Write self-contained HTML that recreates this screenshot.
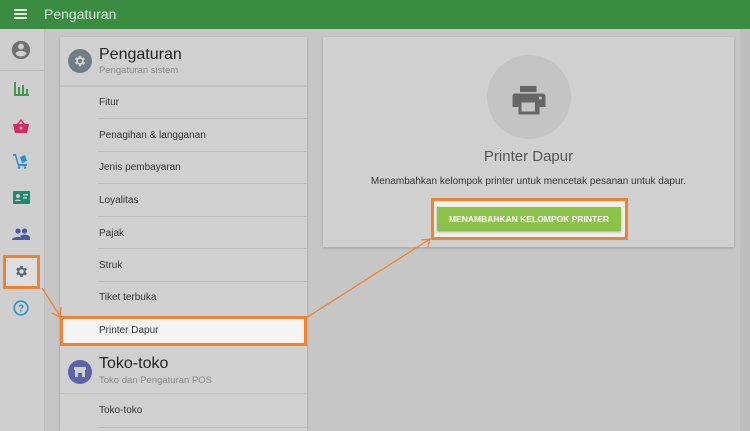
<!DOCTYPE html>
<html><head><style>
*{margin:0;padding:0;box-sizing:border-box}
html,body{width:750px;height:431px;overflow:hidden}
body{background:#c6c6c6;font-family:"Liberation Sans",sans-serif;position:relative}
.top{position:absolute;left:0;top:0;width:750px;height:29px;background:#3a8d40;color:#d8ead8;font-size:14px}
.side{position:absolute;left:0;top:29px;width:45px;height:402px;background:#cfcfcf;border-right:1px solid #bdbdbd}
.card{position:absolute;background:#d0d0d0;box-shadow:0 1px 3px rgba(0,0,0,.2)}
.it{position:absolute;left:39px;font-size:10px;color:#333}
.ln{position:absolute;left:38px;right:0;height:1px;background:#bcbcbc}
.ab{position:absolute}
</style></head><body>
<div class="top">
 <div style="position:absolute;left:14px;top:9px;width:13px;height:2px;background:#e0eee0;box-shadow:0 4px 0 #e0eee0,0 8px 0 #e0eee0"></div>
 <div style="position:absolute;left:44px;top:6px">Pengaturan</div>
</div>
<div style="position:absolute;left:740px;top:29px;width:10px;height:402px;background:#bebebe"></div>
<div class="side">
 <svg class="ab" style="left:10px;top:10px" width="22" height="22" viewBox="0 0 24 24"><path fill="#707070" d="M12 2a10 10 0 100 20 10 10 0 000-20zm0 3a3.2 3.2 0 110 6.4A3.2 3.2 0 0112 5zm0 14.2a7.2 7.2 0 01-6-3.2c0-2 4-3.1 6-3.1s6 1.1 6 3.1a7.2 7.2 0 01-6 3.2z"/></svg>
 <div style="position:absolute;left:0;top:41px;width:44px;height:1px;background:#bbb"></div>
 <svg class="ab" style="left:14px;top:53px" width="15" height="14" viewBox="0 0 15 14"><path fill="#3f9b47" d="M0 0h2v14H0zM0 12h15v2H0zM4 5h2v8H4zM8 3h2v10H8zM12 7h2v6h-2z"/></svg>
 <svg class="ab" style="left:13px;top:90px" width="16" height="14" viewBox="0 0 16 14"><path fill="#d8285e" d="M0 5h16l-2 9H2zM4 5l4-5 4 5h-2L8 2 6 5z"/><circle cx="8" cy="9" r="1.5" fill="#cfcfcf"/></svg>
 <svg class="ab" style="left:13px;top:124px" width="16" height="16" viewBox="0 0 16 16"><path fill="#2c8fd0" d="M0 1h3l3 10h8v2H5L2 3H0zM7 4l5-2 2 6-5 2z"/><circle cx="6" cy="14.5" r="1.3" fill="#2c8fd0"/><circle cx="12" cy="14.5" r="1.3" fill="#2c8fd0"/></svg>
 <svg class="ab" style="left:13px;top:162px" width="17" height="13" viewBox="0 0 17 13"><rect width="17" height="13" rx="1" fill="#1e8a6e"/><circle cx="5" cy="5" r="2" fill="#d0d0d0"/><path fill="#d0d0d0" d="M2 10c0-2 6-2 6 0zM10 3h5v1.5h-5zM10 6h4v1.5h-4z"/></svg>
 <svg class="ab" style="left:12px;top:199px" width="18" height="12" viewBox="0 0 18 12"><circle cx="6" cy="3" r="2.6" fill="#4a57a5"/><circle cx="12.5" cy="3" r="2.6" fill="#4a57a5"/><path fill="#4a57a5" d="M0 12c0-4 12-4 12 0zM8 8c2-2 10-2 10 2v2h-5z"/></svg>
 <div style="position:absolute;left:3px;top:226px;width:37px;height:34px;border:3px solid #f08332;background:#dedede"></div>
 <svg class="ab" style="left:14px;top:235px" width="15" height="15" viewBox="0 0 24 24"><path fill="#5b6b76" d="M19.4 13a7.5 7.5 0 000-2l2.1-1.6-2-3.5-2.5 1a7.3 7.3 0 00-1.7-1L15 3h-4l-.4 2.6a7.3 7.3 0 00-1.7 1l-2.5-1-2 3.5L6.6 11a7.5 7.5 0 000 2l-2.1 1.6 2 3.5 2.5-1a7.3 7.3 0 001.7 1L11 21h4l.4-2.6a7.3 7.3 0 001.7-1l2.5 1 2-3.5zM13 15.5a3.5 3.5 0 110-7 3.5 3.5 0 010 7z" transform="translate(-1 0)"/></svg>
 <svg class="ab" style="left:13px;top:271px" width="16" height="16" viewBox="0 0 16 16"><circle cx="8" cy="8" r="6.8" fill="none" stroke="#2c8fd0" stroke-width="1.6"/><text x="8" y="11.5" font-size="10" font-weight="bold" text-anchor="middle" fill="#2c8fd0" font-family="Liberation Sans">?</text></svg>
</div>

<div class="card" style="left:60px;top:37px;width:247px;height:394px">
 <div style="position:absolute;left:8px;top:12px;width:24px;height:24px;border-radius:50%;background:#6d7c85"></div>
 <svg class="ab" style="left:13px;top:17px" width="14" height="14" viewBox="0 0 24 24"><path fill="#d0d0d0" d="M19.4 13a7.5 7.5 0 000-2l2.1-1.6-2-3.5-2.5 1a7.3 7.3 0 00-1.7-1L15 3h-4l-.4 2.6a7.3 7.3 0 00-1.7 1l-2.5-1-2 3.5L6.6 11a7.5 7.5 0 000 2l-2.1 1.6 2 3.5 2.5-1a7.3 7.3 0 001.7 1L11 21h4l.4-2.6a7.3 7.3 0 001.7-1l2.5 1 2-3.5zM13 15.5a3.5 3.5 0 110-7 3.5 3.5 0 010 7z" transform="translate(-1 0)"/></svg>
 <div style="position:absolute;left:39px;top:9px;font-size:16px;color:#222">Pengaturan</div>
 <div style="position:absolute;left:39px;top:28px;font-size:9.5px;color:#888">Pengaturan sistem</div>
 <div style="position:absolute;left:0;right:0;top:48px;height:2px;background:#c2c2c2"></div>
 <div class="it" style="top:60px">Fitur</div><div class="ln" style="top:81px"></div>
 <div class="it" style="top:93px">Penagihan &amp; langganan</div><div class="ln" style="top:114px"></div>
 <div class="it" style="top:125px">Jenis pembayaran</div><div class="ln" style="top:146px"></div>
 <div class="it" style="top:158px">Loyalitas</div><div class="ln" style="top:179px"></div>
 <div class="it" style="top:191px">Pajak</div><div class="ln" style="top:211px"></div>
 <div class="it" style="top:223px">Struk</div><div class="ln" style="top:244px"></div>
 <div class="it" style="top:255px">Tiket terbuka</div>
 <div style="position:absolute;left:0;top:279px;width:247px;height:30px;background:#f3f3f3;border:3px solid #f08332"></div>
 <div class="it" style="top:288px">Printer Dapur</div>
 <div style="position:absolute;left:8px;top:323px;width:24px;height:24px;border-radius:50%;background:#5d63a8"></div>
 <svg class="ab" style="left:14px;top:330px" width="12" height="10" viewBox="0 0 12 10"><path fill="#d0d0d0" d="M0 0h12v3H0zM1 3h10v7H1z"/><rect x="4" y="6" width="4" height="4" fill="#5d63a8"/></svg>
 <div style="position:absolute;left:39px;top:318px;font-size:16px;color:#222">Toko-toko</div>
 <div style="position:absolute;left:39px;top:338px;font-size:9.5px;color:#888">Toko dan Pengaturan POS</div>
 <div style="position:absolute;left:0;right:0;top:356px;height:1px;background:#c2c2c2"></div>
 <div class="it" style="top:368px">Toko-toko</div><div class="ln" style="top:390px"></div>
</div>

<div class="card" style="left:323px;top:37px;width:411px;height:210px">
 <div style="position:absolute;left:164px;top:18px;width:84px;height:84px;border-radius:50%;background:#c4c4c4"></div>
 <svg class="ab" style="left:188px;top:46px" width="36" height="36" viewBox="0 0 24 24"><path fill="#666" d="M6 2h11v4H6zM2 7h19a2 2 0 012 2v7h-4v5H5v-5H1V9a2 2 0 011-2z"/><rect x="7" y="13" width="9" height="6" fill="#c4c4c4"/><circle cx="19.5" cy="10" r="1" fill="#c4c4c4"/></svg>
 <div style="position:absolute;left:0;right:0;top:111px;text-align:center;font-size:15px;color:#555">Printer Dapur</div>
 <div style="position:absolute;left:0;right:0;top:139px;text-align:center;font-size:10px;color:#333">Menambahkan kelompok printer untuk mencetak pesanan untuk dapur.</div>
 <div style="position:absolute;left:108px;top:161px;width:197px;height:42px;border:3px solid #f08332;background:#efefef"></div>
 <div style="position:absolute;left:114px;top:170px;width:184px;height:24px;background:#8bc34a;box-shadow:0 1px 2px rgba(0,0,0,.3);color:#fff;font-size:8.5px;font-weight:bold;text-align:center;line-height:24px">MENAMBAHKAN KELOMPOK PRINTER</div>
</div>

<svg class="ab" style="left:0;top:0" width="750" height="431">
 <g stroke="#f08332" stroke-width="1.3" fill="none">
  <path d="M42 288L60 316M52 313L60 317L61 307"/>
  <path d="M306 318L430 239M421 240L430 239L428 247"/>
 </g>
</svg>
</body></html>
